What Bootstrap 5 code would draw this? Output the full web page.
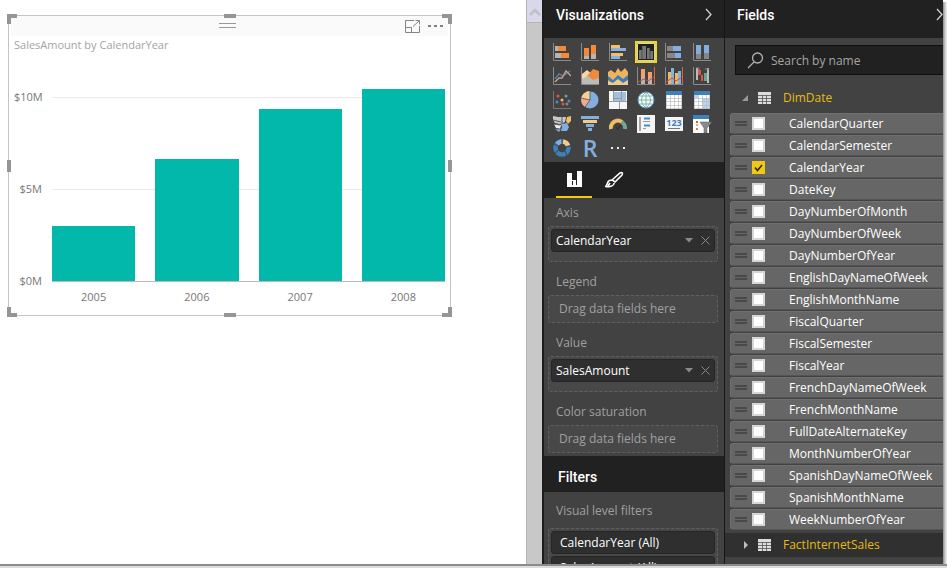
<!DOCTYPE html>
<html lang="en">
<head>
<meta charset="utf-8">
<meta name="viewport" content="width=device-width, initial-scale=1">
<title>SalesAmount by CalendarYear</title>
<link href="https://cdn.jsdelivr.net/npm/bootstrap@5.3.0/dist/css/bootstrap.min.css" rel="stylesheet">
<style>
body{font-family:"Open Sans","Noto Sans",sans-serif;font-size:12px;line-height:18px;background:#fff}
button,input{font:inherit;color:inherit}
.app-frame{height:100vh;padding-bottom:2px;background:#dcdcdc}
.app-body{border-bottom:2px solid #8c8c8c;background:#fff}
.btn-plain{background:none;border:0;padding:0;display:flex;align-items:center;justify-content:center}
svg{display:block}
/* report canvas */
.canvas{padding:15px 0 0 8px}
.visual{width:443px;max-width:100%;border:1px solid #c4c4c4;position:relative}
.visual-bar{height:20px;background:#fafafa;margin:0 2px}
.bar-side{flex:1 1 0}
.visual-title{color:#a3a3a3;padding:0 5px;font-size:11px}
.grip{position:absolute;background:#959595}
.grip.mid-h{width:12px;height:4px;left:calc(50% - 6px)}
.grip.mid-v{width:4px;height:12px;top:calc(50% - 6px)}
.g-top{top:-2px}
.g-bottom{bottom:-2px}
.g-left{left:-2px}
.g-right{right:-2px}
.corner{position:absolute;width:10px;height:10px;border:0 solid #959595}
.c-tl{top:-2px;left:-2px;border-width:4px 0 0 4px}
.c-tr{top:-2px;right:-2px;border-width:4px 4px 0 0}
.c-bl{bottom:-2px;left:-2px;border-width:0 0 4px 4px}
.c-br{bottom:-2px;right:-2px;border-width:0 4px 4px 0}
.chart{padding:25px 5px 0 5px;color:#777;font-size:11px;line-height:16px}
.y-axis{width:28px;padding-top:10px;height:210px;text-align:right;margin-right:10px}
.plot{height:203px;position:relative}
.lines{position:absolute;left:0;right:0;bottom:0;height:185px;border-bottom:1px solid #bbb}
.lines div{height:92px;border-top:1px solid #ebebeb}
.bars{position:relative;height:202px;gap:20px}
.bar{flex:1;background:#01b8aa}
.x-axis{gap:20px;padding:0 0 10px 38px}
.x-axis div{flex:1;text-align:center}
/* scroll gutter */
.gutter{width:18px;background:#c8c8c8;border-left:1px solid #b4b4b4;border-right:2px solid #1c1c1c}
.gutter-top{height:23px;background:#d9d8ea;border-bottom:1px solid #b4b4b4}
/* panes */
.pane{background:#424242;color:#f2f2f2}
.viz-pane{width:181px;border-right:1px solid #161616}
.fields-pane{width:218px}
.pane-head{background:#212121;font:500 14px/20px Roboto,sans-serif;color:#fff}
.head-top{height:38px;padding:0 10px 9px 12px}
.icon-grid{display:grid;grid-template-columns:repeat(6,28px);grid-auto-rows:24px;padding:2px 4px}
.picked{width:22px;height:22px;border:2px solid #f0d81c;margin:1px 3px;background:#1f1f1f}
.r-glyph{font-size:23px;font-weight:600;line-height:24px;color:#82afe0}
.tabs{height:36px;background:#212121;padding-left:12px;gap:4px}
.tabs button{width:36px;border-bottom:2px solid transparent}
.tabs .on{border-bottom-color:#f2c811}
.well-label{color:#a0a0a0;padding:11px 12px 4px}
.well-label.first{padding-top:6px}
.well-label.filter{padding:10px 12px 8px}
.well{margin:0 6px 0 4px;border:1px dashed #606060;border-radius:3px;background:#484848;padding:2px}
.well.filled{height:36px}
.well.empty{height:28px;color:#a0a0a0;padding:4px 10px}
.pill{height:23px;background:#2f2f2f;border:1px solid #252525;border-radius:3px;color:#fff;padding:0 4px}
.pill.wide{padding:0 8px;margin-bottom:2px}
.filters-head{height:36px;padding:5px 14px 0;margin-top:3px}
/* field list */
.search{margin:7px 0 0 10px;height:30px;background:#212121;border:1px solid #0e0e0e;border-right:0;padding-left:11px;gap:7px}
.search input{background:none;border:0;outline:0;min-width:0;width:100%;padding:2px 0 0;font-size:12px;color:#ddd}
.search input::placeholder{color:#a6a6a6;opacity:1}
.table-row{height:24px;color:#e3bd12;padding-left:16px;gap:7px}
.table-row.open{margin:11px 0 3px}
.table-row.closed{background:#303030;margin-top:3px}
.table-row span{margin-left:5px}
.field{height:21px;margin:0 0 1px 5px;background:#666;border:1px solid #707070;border-right:0;border-bottom-color:#555;border-radius:3px 0 0 3px;padding-left:4px;color:#fff}
.field::before{content:"";width:12px;height:5px;border-top:2px solid #494949;border-bottom:2px solid #494949;margin-right:5px}
.field input{appearance:none;width:13px;height:13px;margin:0 24px 0 0;background:#fff;border:2px solid #d6d6d6;flex:none}
.field input:checked{border:0;background:#f2c811 url("data:image/svg+xml,%3Csvg xmlns='http://www.w3.org/2000/svg' viewBox='0 0 13 13'%3E%3Cpath d='M3 6.5l2.5 3L10 4' fill='none' stroke='%23222' stroke-width='1.5'/%3E%3C/svg%3E")}
.edge{width:4px;background:linear-gradient(90deg,#8c8c8c,#c8c8c8 50%,#f4f4f4);margin-top:2px}
</style>
<script src="https://cdn.jsdelivr.net/npm/bootstrap@5.3.0/dist/js/bootstrap.bundle.min.js"></script>
</head>
<body>
<div class="app-frame overflow-hidden">
<div class="app-body d-flex h-100 overflow-hidden">
  <main class="canvas flex-grow-1">
    <section class="visual">
      <div class="visual-bar d-flex align-items-center">
        <div class="bar-side"></div>
        <svg width="17" height="6" stroke="#999"><path d="M0 .5h17M0 4.5h17"/></svg>
        <div class="bar-side d-flex justify-content-end align-items-center gap-2 pe-1">
          <button class="btn-plain" aria-label="Focus mode"><svg width="15" height="13" fill="none" stroke="#858585"><path d="M9 .5H.5v12h14V6M.5 7.500h6v5M14 1L8 6.500M10.500.5h4v4"/></svg></button>
          <button class="btn-plain" aria-label="More options"><svg width="16" height="4" fill="#808080"><path d="M0 1h3v2H0zM6 1h3v2H6zM12 1h3v2h-3z"/></svg></button>
        </div>
      </div>
      <div class="visual-title">SalesAmount by CalendarYear</div>
      <div class="chart">
        <div class="d-flex">
          <div class="y-axis d-flex flex-column justify-content-between"><div>$10M</div><div>$5M</div><div>$0M</div></div>
          <div class="plot flex-grow-1">
            <div class="lines"><div></div><div></div></div>
            <div class="bars d-flex align-items-end">
              <div class="bar" style="height:27.2%"></div>
              <div class="bar" style="height:60.4%"></div>
              <div class="bar" style="height:85.1%"></div>
              <div class="bar" style="height:95%"></div>
            </div>
          </div>
        </div>
        <div class="x-axis d-flex"><div>2005</div><div>2006</div><div>2007</div><div>2008</div></div>
      </div>
      <i class="corner c-tl"></i><i class="corner c-tr"></i><i class="corner c-bl"></i><i class="corner c-br"></i>
      <i class="grip mid-h g-top"></i><i class="grip mid-h g-bottom"></i>
      <i class="grip mid-v g-left"></i><i class="grip mid-v g-right"></i>
    </section>
  </main>
  <div class="gutter flex-shrink-0"><div class="gutter-top d-flex justify-content-center pt-2"><svg width="12" height="8" fill="none" stroke="#bfc0c4" stroke-width="2.500"><path d="M1 7l5-5 5 5"/></svg></div></div>

  <aside class="pane viz-pane flex-shrink-0">
    <div class="pane-head head-top d-flex justify-content-between align-items-center">Visualizations
      <button class="btn-plain" aria-label="Collapse visualizations"><svg width="9" height="13" fill="none" stroke="#d0d0d0" stroke-width="1.300"><path d="M1 1l5 5.500L1 12"/></svg></button></div>
    <div class="icon-grid">
      <button class="btn-plain" aria-label="Stacked bar chart"><svg width="18" height="18"><path fill="#b5b5b5" d="M2 3h4v5H2zM2 10h6v5H2z"/><path fill="#f08a3c" d="M5 3h8v5H5zM8 10h8v5H8z"/><path d="M.5 0v17.500H18" fill="none" stroke="#8a8a8a"/></svg></button>
      <button class="btn-plain" aria-label="Stacked column chart"><svg width="18" height="18"><path fill="#b5b5b5" d="M3 13h5v3H3zM10 10h5v6h-5z"/><path fill="#f08a3c" d="M3 5h5v8H3zM10 2h5v9h-5z"/><path d="M.5 0v17.500H18" fill="none" stroke="#8a8a8a"/></svg></button>
      <button class="btn-plain" aria-label="Clustered bar chart"><svg width="18" height="18"><path fill="#f0c070" d="M2 2h9v3H2zM2 10h12v3H2z"/><path fill="#86b2e0" d="M2 5h15v3H2zM2 13h9v3H2z"/><path d="M.5 0v17.500H18" fill="none" stroke="#8a8a8a"/></svg></button>
      <button class="btn-plain picked" aria-label="Clustered column chart" aria-pressed="true"><svg width="18" height="18"><path d="M.5.5h17v17H.5z" fill="none" stroke="#fff" stroke-opacity=".8"/><path fill="#777" d="M2 7h3v9H2zM5 3h4v13H5zM10 5h3v11h-3zM13 8h3v8h-3z"/><path d="M5 3v13M13 5v11" stroke="#333" stroke-width=".6"/></svg></button>
      <button class="btn-plain" aria-label="100% stacked bar chart"><svg width="18" height="18"><path fill="#868686" d="M2 3h6v5H2zM2 10h8v5H2z"/><path fill="#82afe0" d="M8 3h8v5H8zM10 10h6v5h-6z"/><path d="M.5 0v17.500H18" fill="none" stroke="#8a8a8a"/></svg></button>
      <button class="btn-plain" aria-label="100% stacked column chart"><svg width="18" height="18"><path fill="#868686" d="M3 11h5v5H3zM11 9h5v7h-5z"/><path fill="#82afe0" d="M3 2h5v9H3zM11 2h5v8h-5z"/><path d="M.5 0v17.500H18" fill="none" stroke="#8a8a8a"/></svg></button>

      <button class="btn-plain" aria-label="Line chart"><svg width="18" height="18" fill="none" stroke-width="1.400"><path stroke="#4a80b8" d="M2 12l4-5 4 2 7-5"/><path stroke="#d09a88" d="M2 15l4-4 3 0 4-7 5 5"/><path d="M.5 0v17.500H18" stroke="#8a8a8a" stroke-width="1"/></svg></button>
      <button class="btn-plain" aria-label="Area chart"><svg width="18" height="18"><path fill="#f7d5a5" d="M1 7l5-4 5 4v9H1z"/><path fill="#f08a3c" d="M6 9l6-7 6 2v13H8z"/><path fill="#b9bcbc" d="M1 12l6-3 5 4 6-2v6H1z"/><path d="M.5 0v17.500H18" fill="none" stroke="#8a8a8a"/></svg></button>
      <button class="btn-plain" aria-label="Stacked area chart"><svg width="20" height="18"><path fill="#efb45b" d="M0 5l3-2 4 3 3-5 3 4 4-4 3 4v13H0z"/><path fill="#3d7dbd" d="M0 9l5 4 5-5 5 4 5-4v5l-5 4-5-4-5 4-5-4z"/><path fill="#f3cb82" d="M0 18v-4l5 2 5-4 5 4 5-3v5z"/></svg></button>
      <button class="btn-plain" aria-label="Line and stacked column chart"><svg width="20" height="18"><path fill="#f5a06a" d="M5 2h4v8H5zM12 5h4v6h-4z"/><path fill="#b5b5b5" d="M5 10h4v7H5zM12 11h4v6h-4z"/><path d="M1.500 0v17.500H19" fill="none" stroke="#8a8a8a"/><path d="M2 15l6-3 4 2 6-4" fill="none" stroke="#d44a36"/><path d="M18.500 0v17" stroke="#d06b33"/></svg></button>
      <button class="btn-plain" aria-label="Line and clustered column chart"><svg width="20" height="18"><path fill="#efb866" d="M4 5h3v12H4zM11 6h3v11h-3z"/><path fill="#86b2e0" d="M7 1h3v16H7zM14 4h3v13h-3z"/><path d="M1.500 0v17.500H19" fill="none" stroke="#8a8a8a"/><path d="M2 15l6-4 4 3 6-4" fill="none" stroke="#d44a36"/><path d="M18.500 0v17" stroke="#d06b33"/></svg></button>
      <button class="btn-plain" aria-label="Waterfall chart"><svg width="18" height="18"><path fill="#bbb" d="M3 1h2v12H3zM14 1h2v15h-2z"/><path fill="#e05540" d="M5 3h3v5H5zM8 8h2v6H8z"/><path fill="#67a58c" d="M11 6h3v8h-3z"/><path d="M.5 0v17.500H18M3 1h3v3M12 2h4" fill="none" stroke="#8a8a8a"/></svg></button>

      <button class="btn-plain" aria-label="Scatter chart"><svg width="18" height="18"><path d="M.5 0v17.500H18" fill="none" stroke="#777"/><g fill="#e05540"><circle cx="5" cy="5" r="1.500"/><circle cx="10" cy="13" r="1.500"/></g><g fill="#4a8ac8"><circle cx="4" cy="11" r="1.500"/><circle cx="16" cy="10" r="1.500"/></g><circle cx="9" cy="9" r="1.500" fill="#efb866"/><circle cx="13" cy="5" r="1.500" fill="#67a58c"/><circle cx="14" cy="13" r="1.500" fill="#888"/></svg></button>
      <button class="btn-plain" aria-label="Pie chart"><svg width="18" height="18"><circle cx="9" cy="9" r="8.500" fill="#82afe0"/><path fill="#f3d195" d="M9 9V0a9 9 0 0 0-9 8z"/><path fill="#efaa92" d="M9 9L.3 7A9 9 0 0 0 4 16z"/><path d="M9 0v9L0 7M9 9l-5 7" fill="none" stroke="#444" stroke-width=".7"/></svg></button>
      <button class="btn-plain" aria-label="Treemap"><svg width="18" height="18"><path fill="#f5f5f5" d="M0 0h18v18H0z"/><path fill="#9fc0df" d="M5 1h7v6H5zM13 1h4v9h-4zM5 8h7v2H5z"/><path d="M4.500 0v10M0 10.500h18M12.500 0v10M4 7.500h8M10.500 10.500V18" stroke="#777" fill="none" stroke-width=".7"/></svg></button>
      <button class="btn-plain" aria-label="Map"><svg width="18" height="18"><circle cx="9" cy="9" r="8" fill="#f4faf8" stroke="#5794c4"/><path d="M9 1v16M1 9h16M3 5h12M3 13h12M9 1C3 6 3 12 9 17M9 1c6 5 6 11 0 16" fill="none" stroke="#6aaa9b" stroke-width=".8"/></svg></button>
      <button class="btn-plain" aria-label="Table"><svg width="18" height="18"><path fill="#fff" d="M1 0h16v18H1z"/><path fill="#3d80bd" d="M1 0h16v4H1z"/><path d="M1.500 4v14M5.500 4v14M9.500 4v14M13.500 4v14M16.500 4v14M1 7.500h16M1 10.500h16M1 14.500h16M1 17.500h16" stroke="#bdbdbd" stroke-width=".7"/></svg></button>
      <button class="btn-plain" aria-label="Matrix"><svg width="18" height="18"><path fill="#fff" d="M1 0h16v18H1z"/><path fill="#b7d3ef" d="M1 4h4v3H1zM9 7h8v11H9z"/><path fill="#3d80bd" d="M1 0h16v4H1z"/><path d="M1.500 4v14M5.500 4v14M9.500 4v14M13.500 4v14M16.500 4v14M1 7.500h16M1 10.500h16M1 14.500h16M1 17.500h16" stroke="#bdbdbd" stroke-width=".7"/></svg></button>

      <button class="btn-plain" aria-label="Filled map"><svg width="20" height="18"><path fill="#c9c9c9" d="M1 1l5 1h8l-1 5-5 2-5-1-2-3z"/><path fill="#82afe0" d="M9 9l6-1 2 4-2 4-6 0 1-4z"/><path fill="#f0bd68" d="M15 2l4-1v5l-3 3-2-3z"/><path fill="#eee" d="M2 9l7 1-1 4-4-1z"/><path fill="#82afe0" d="M3 14l6 0-2 3z"/><path d="M1 5l8 2M2 9l6 1M10 2v6M4 14l5 0" stroke="#555" fill="none"/></svg></button>
      <button class="btn-plain" aria-label="Funnel"><svg width="18" height="16"><path fill="#82afe0" d="M0 0h18v3H0zM5 8h8v3H5zM7 12h4v3H7z"/><path fill="#f3cb82" d="M2 4h14v3H2z"/></svg></button>
      <button class="btn-plain" aria-label="Gauge"><svg width="18" height="18" fill="none" stroke-width="4"><path d="M2 14a7 7 0 0 1 11-7" stroke="#f0bd68"/><path d="M13 7a8 8 0 0 1 3 7" stroke="#72a88f"/><path d="M7 12l2 2 3-4" stroke="#333" stroke-width="1.500"/></svg></button>
      <button class="btn-plain" aria-label="Multi-row card"><svg width="18" height="18"><path fill="#f5f5f5" d="M0 0h18v18H0z"/><path fill="#a5a5a5" d="M2 2h2v14H2z"/><path d="M7 3.500h6M7 10.500h6" stroke="#4a8ac8" stroke-width="2"/><path d="M6 6.500h7M6 13.500h3" stroke="#999"/></svg></button>
      <button class="btn-plain" aria-label="Card"><svg width="20" height="14"><path fill="#f5f5f5" d="M1 0h18v14H1z"/><text x="10" y="9" text-anchor="middle" font-family="Open Sans" font-size="9" font-weight="700" fill="#3d80bd">123</text><path d="M4 11.500h12" stroke="#777"/></svg></button>
      <button class="btn-plain" aria-label="Slicer"><svg width="20" height="18"><path fill="#fff" d="M1 0h16v18H1z"/><path fill="#3d80bd" d="M1 0h16v4H1z"/><path fill="#e05540" d="M4 6h2v2H4z"/><path fill="#efb04d" d="M4 9h2v2H4z"/><path fill="#e07a40" d="M4 13h2v2H4z"/><path fill="#8a8a8a" stroke="#555" stroke-width=".5" d="M8 7h12l-5 6v5h-3v-5z"/></svg></button>

      <button class="btn-plain" aria-label="Donut chart"><svg width="18" height="18" fill="none" stroke-width="4.500"><circle cx="9" cy="9" r="6.500" stroke="#3d80bd"/><path d="M9 2.500a6.500 6.500 0 0 0-5 2.500" stroke="#82afe0"/><path d="M10 2.500a6.500 6.500 0 0 1 5 4" stroke="#f3cb82"/><path d="M9 0v5M18 7l-5 1M1 5l4 2M2 15l3-4M14 17l-2-5" stroke="#444" stroke-width="1"/></svg></button>
      <button class="btn-plain r-glyph" aria-label="R script visual">R</button>
      <button class="btn-plain" aria-label="More visuals"><svg width="16" height="4" fill="#eee"><path d="M1 1h2v2H1zM7 1h2v2H7zM13 1h2v2h-2z"/></svg></button>
    </div>
    <div class="tabs d-flex">
      <button class="btn-plain on" aria-label="Fields"><svg width="15" height="17" fill="#fff"><path d="M0 2h5v12H0zM5 9h4v5H5zM10 0h5v16h-5z"/><path d="M0 14h15v2H0z"/><path d="M5 10h1v4H5zM9 10h1v4H9z" fill="#212121"/></svg></button>
      <button class="btn-plain" aria-label="Format"><svg width="19" height="17" fill="none" stroke="#fff" stroke-width="1.600"><path d="M7 9l8-7c2-1 3 0 2 2l-7 7zM7 9c-3 0-4 1-4.500 3S1 15 .7 15.500c4 .8 8 0 8.500-3.500M5 12l-2 3"/></svg></button>
    </div>
    <div class="well-label first">Axis</div>
    <div class="well filled"><div class="pill d-flex align-items-center"><span class="me-auto">CalendarYear</span>
      <button class="btn-plain me-2" aria-label="CalendarYear options"><svg width="8" height="5" fill="#8a8a8a"><path d="M0 0h8L4 4.500z"/></svg></button><button class="btn-plain" aria-label="Remove CalendarYear"><svg width="9" height="9" stroke="#8a8a8a"><path d="M.5.5l8 8m0-8l-8 8"/></svg></button></div></div>
    <div class="well-label">Legend</div>
    <div class="well empty">Drag data fields here</div>
    <div class="well-label">Value</div>
    <div class="well filled"><div class="pill d-flex align-items-center"><span class="me-auto">SalesAmount</span>
      <button class="btn-plain me-2" aria-label="SalesAmount options"><svg width="8" height="5" fill="#8a8a8a"><path d="M0 0h8L4 4.500z"/></svg></button><button class="btn-plain" aria-label="Remove SalesAmount"><svg width="9" height="9" stroke="#8a8a8a"><path d="M.5.5l8 8m0-8l-8 8"/></svg></button></div></div>
    <div class="well-label">Color saturation</div>
    <div class="well empty">Drag data fields here</div>
    <div class="pane-head filters-head d-flex align-items-center">Filters</div>
    <div class="well-label filter">Visual level filters</div>
    <div class="well"><div class="pill wide d-flex align-items-center">CalendarYear (All)</div><div class="pill wide d-flex align-items-center">SalesAmount (All)</div></div>
  </aside>

  <aside class="pane fields-pane flex-shrink-0 overflow-hidden">
    <div class="pane-head head-top d-flex justify-content-between align-items-center pe-0">Fields
      <button class="btn-plain" aria-label="Collapse fields"><svg width="7" height="13" fill="none" stroke="#d0d0d0" stroke-width="1.300"><path d="M1 1l5 5.500L1 12"/></svg></button></div>
    <div class="search d-flex align-items-center">
      <svg width="17" height="17" fill="none" stroke="#b0b0b0" stroke-width="1.300" class="flex-shrink-0"><circle cx="10.500" cy="6" r="5"/><path d="M7 10l-6 6"/></svg>
      <input type="text" placeholder="Search by name" aria-label="Search by name">
    </div>
    <div class="table-row open d-flex align-items-center"><svg width="10" height="7" fill="#9a9a9a"><path d="M7 0v6H1z"/></svg><svg width="13" height="12"><path fill="#ddd" d="M0 0h13v12H0z"/><path d="M0 3.500h13M0 6.500h13M0 9.500h13M4.500 3v9M8.500 3v9" stroke="#555" stroke-width=".8"/></svg><span>DimDate</span></div>
    <label class="field d-flex align-items-center"><input type="checkbox">CalendarQuarter</label>
    <label class="field d-flex align-items-center"><input type="checkbox">CalendarSemester</label>
    <label class="field d-flex align-items-center"><input type="checkbox" checked>CalendarYear</label>
    <label class="field d-flex align-items-center"><input type="checkbox">DateKey</label>
    <label class="field d-flex align-items-center"><input type="checkbox">DayNumberOfMonth</label>
    <label class="field d-flex align-items-center"><input type="checkbox">DayNumberOfWeek</label>
    <label class="field d-flex align-items-center"><input type="checkbox">DayNumberOfYear</label>
    <label class="field d-flex align-items-center"><input type="checkbox">EnglishDayNameOfWeek</label>
    <label class="field d-flex align-items-center"><input type="checkbox">EnglishMonthName</label>
    <label class="field d-flex align-items-center"><input type="checkbox">FiscalQuarter</label>
    <label class="field d-flex align-items-center"><input type="checkbox">FiscalSemester</label>
    <label class="field d-flex align-items-center"><input type="checkbox">FiscalYear</label>
    <label class="field d-flex align-items-center"><input type="checkbox">FrenchDayNameOfWeek</label>
    <label class="field d-flex align-items-center"><input type="checkbox">FrenchMonthName</label>
    <label class="field d-flex align-items-center"><input type="checkbox">FullDateAlternateKey</label>
    <label class="field d-flex align-items-center"><input type="checkbox">MonthNumberOfYear</label>
    <label class="field d-flex align-items-center"><input type="checkbox">SpanishDayNameOfWeek</label>
    <label class="field d-flex align-items-center"><input type="checkbox">SpanishMonthName</label>
    <label class="field d-flex align-items-center"><input type="checkbox">WeekNumberOfYear</label>
    <div class="table-row closed d-flex align-items-center"><svg width="10" height="8" fill="#bdbdbd"><path d="M3 0l4 4-4 4z"/></svg><svg width="13" height="12"><path fill="#ddd" d="M0 0h13v12H0z"/><path d="M0 3.500h13M0 6.500h13M0 9.500h13M4.500 3v9M8.500 3v9" stroke="#555" stroke-width=".8"/></svg><span>FactInternetSales</span></div>
  </aside>
  <div class="edge flex-shrink-0"></div>
</div>
</div>
</body>
</html>
